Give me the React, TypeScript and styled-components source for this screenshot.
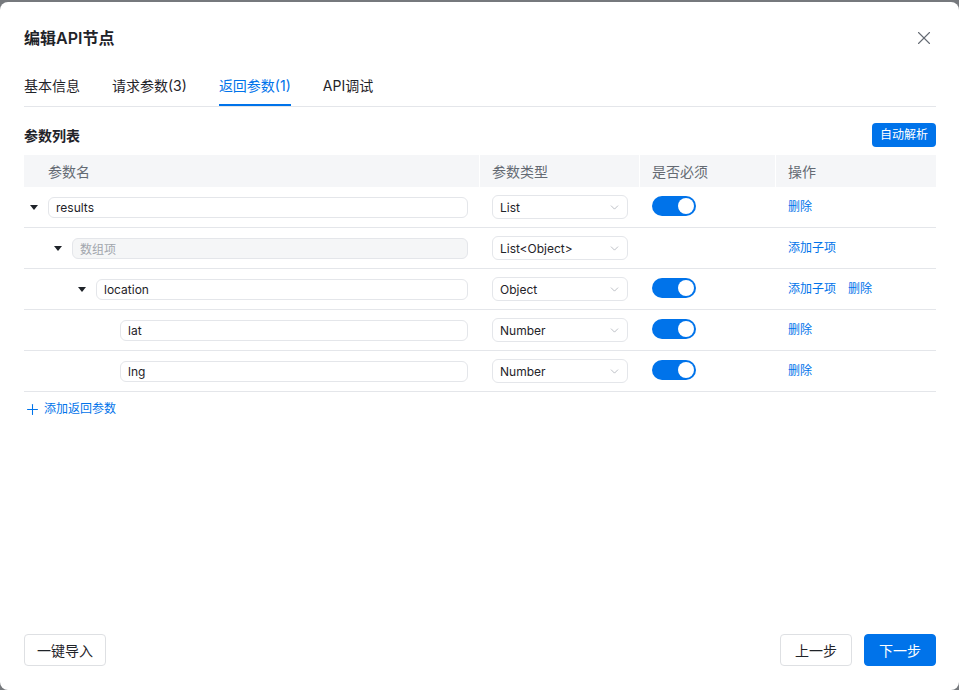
import React from "react";
import styled, { createGlobalStyle } from "styled-components";
import { X, ChevronDown, Plus } from "lucide-react";

const blue = "#0073ea";
const textMain = "#1f2329";
const borderColor = "#e4e6ea";

const GlobalStyle = createGlobalStyle`
  html, body {
    margin: 0;
    padding: 0;
    background: #76797d;
    overflow: hidden;
  }
  body {
    font-family: Inter, "Noto Sans CJK SC", sans-serif;
    color: ${textMain};
  }
`;

interface ParamRow {
  id: string;
  name: string;
  placeholder?: string;
  level: number;
  expandable: boolean;
  type: string;
  required?: boolean;
  actions: string[];
}

const rows: ParamRow[] = [
  { id: "1", name: "results", level: 0, expandable: true, type: "List", required: true, actions: ["删除"] },
  { id: "2", name: "", placeholder: "数组项", level: 1, expandable: true, type: "List<Object>", actions: ["添加子项"] },
  { id: "3", name: "location", level: 2, expandable: true, type: "Object", required: true, actions: ["添加子项", "删除"] },
  { id: "4", name: "lat", level: 3, expandable: false, type: "Number", required: true, actions: ["删除"] },
  { id: "5", name: "lng", level: 3, expandable: false, type: "Number", required: true, actions: ["删除"] },
];

const tabs = ["基本信息", "请求参数(3)", "返回参数(1)", "API调试"];

const App: React.FC = () => {
  return (
    <>
      <GlobalStyle />
      <Modal>
        <Header>
          <Title>编辑API节点</Title>
          <CloseButton>
            <X size={22} strokeWidth={1.2} color="#646a73" />
          </CloseButton>
        </Header>
        <TabBar>
          {tabs.map((t, i) => (
            <Tab key={t} active={i === 2}>
              {t}
            </Tab>
          ))}
        </TabBar>
        <Toolbar>
          <SectionTitle>参数列表</SectionTitle>
          <SmallPrimary>自动解析</SmallPrimary>
        </Toolbar>
        <Table>
          <HeadRow>
            <HeadCell first>参数名</HeadCell>
            <HeadCell>参数类型</HeadCell>
            <HeadCell>是否必须</HeadCell>
            <HeadCell>操作</HeadCell>
          </HeadRow>
          {rows.map((row) => (
            <BodyRow key={row.id}>
              <NameCell>
                <Indent level={row.level} />
                <CaretBox>{row.expandable && <Caret />}</CaretBox>
                <NameInput disabled={!row.name}>
                  {row.name || <Placeholder>{row.placeholder}</Placeholder>}
                </NameInput>
              </NameCell>
              <Cell>
                <Select>
                  <span>{row.type}</span>
                  <ChevronDown size={13} strokeWidth={1.1} color="#8f959e" />
                </Select>
              </Cell>
              <Cell>
                {row.required && (
                  <Switch>
                    <Knob />
                  </Switch>
                )}
              </Cell>
              <ActionCell>
                {row.actions.map((a) => (
                  <LinkText key={a}>{a}</LinkText>
                ))}
              </ActionCell>
            </BodyRow>
          ))}
        </Table>
        <AddRow>
          <Plus size={17} strokeWidth={1.5} color={blue} />
          <span>添加返回参数</span>
        </AddRow>
        <Footer>
          <Button>一键导入</Button>
          <FooterRight>
            <Button>上一步</Button>
            <Button primary>下一步</Button>
          </FooterRight>
        </Footer>
      </Modal>
    </>
  );
};

const Modal = styled.div`
  margin-top: 2px;
  height: 688px;
  width: 959px;
  box-sizing: border-box;
  background: #fff;
  border-radius: 8px;
  padding: 0 23px 24px 24px;
  display: flex;
  flex-direction: column;
`;

const Header = styled.div`
  display: flex;
  align-items: center;
  justify-content: space-between;
  padding-top: 24px;
  height: 24px;
  box-sizing: content-box;
`;

const Title = styled.div`
  font-size: 16px;
  line-height: 24px;
  font-weight: 600;
`;

const CloseButton = styled.div`
  display: flex;
  align-items: center;
  margin-right: 1px;
`;

const TabBar = styled.div`
  display: flex;
  gap: 32px;
  margin-top: 17px;
  border-bottom: 1px solid ${borderColor};
`;

const Tab = styled.div<{ active?: boolean }>`
  font-size: 14px;
  line-height: 22px;
  padding: 8px 0 7px;
  color: ${({ active }) => (active ? blue : textMain)};
  border-bottom: 2px solid ${({ active }) => (active ? blue : "transparent")};
`;

const Toolbar = styled.div`
  display: flex;
  align-items: center;
  justify-content: space-between;
  margin-top: 16px;
  height: 24px;
`;

const SectionTitle = styled.div`
  font-size: 14px;
  font-weight: 600;
`;

const SmallPrimary = styled.div`
  background: ${blue};
  color: #fff;
  font-size: 12px;
  height: 24px;
  line-height: 24px;
  padding: 0 8px;
  border-radius: 4px;
`;

const Table = styled.div`
  margin-top: 8px;
  display: flex;
  flex-direction: column;
`;

const columns = "455px 159px 135px 1fr";

const HeadRow = styled.div`
  display: grid;
  grid-template-columns: ${columns};
  column-gap: 1px;
  height: 32px;
`;

const HeadCell = styled.div<{ first?: boolean }>`
  background: #f5f6f8;
  display: flex;
  align-items: center;
  padding-left: ${({ first }) => (first ? "24px" : "12px")};
  font-size: 14px;
  color: #646a73;
`;

const BodyRow = styled.div`
  display: grid;
  grid-template-columns: ${columns};
  column-gap: 1px;
  height: 40px;
  border-bottom: 1px solid ${borderColor};
`;

const Cell = styled.div`
  display: flex;
  align-items: center;
  padding: 0 11px 0 12px;
`;

const NameCell = styled(Cell)`
  padding: 0 11px 0 0;
`;

const Indent = styled.div<{ level: number }>`
  width: ${({ level }) => level * 24}px;
  flex-shrink: 0;
`;

const CaretBox = styled.div`
  width: 24px;
  flex-shrink: 0;
  display: flex;
  align-items: center;
  padding-left: 6px;
  box-sizing: border-box;
`;

const Caret = styled.div`
  width: 0;
  height: 0;
  border-left: 4px solid transparent;
  border-right: 4px solid transparent;
  border-top: 5px solid #1f2329;
`;

const NameInput = styled.div<{ disabled?: boolean }>`
  flex: 1;
  height: 21px;
  box-sizing: border-box;
  border: 1px solid ${borderColor};
  border-radius: 6px;
  background: ${({ disabled }) => (disabled ? "#f5f6f7" : "#fff")};
  display: flex;
  align-items: center;
  padding: 0 7px;
  font-size: 12px;
`;

const Placeholder = styled.span`
  color: #a2a6ad;
`;

const Select = styled.div`
  width: 136px;
  height: 24px;
  box-sizing: border-box;
  border: 1px solid ${borderColor};
  border-radius: 6px;
  display: flex;
  align-items: center;
  justify-content: space-between;
  padding: 0 6px 0 7px;
  font-size: 12px;
`;

const Switch = styled.div`
  width: 44px;
  height: 20px;
  border-radius: 10px;
  background: ${blue};
  display: flex;
  align-items: center;
  justify-content: flex-end;
  padding: 0 2px;
  box-sizing: border-box;
  margin-top: -3px;
`;

const Knob = styled.div`
  width: 16px;
  height: 16px;
  border-radius: 50%;
  background: #fff;
`;

const ActionCell = styled(Cell)`
  gap: 12px;
  margin-top: -3px;
`;

const LinkText = styled.span`
  color: ${blue};
  font-size: 12px;
`;

const AddRow = styled.div`
  margin-top: 8px;
  display: flex;
  align-items: center;
  gap: 3px;
  font-size: 12px;
  line-height: 18px;
  color: ${blue};
`;

const Footer = styled.div`
  margin-top: auto;
  display: flex;
  align-items: center;
  justify-content: space-between;
`;

const FooterRight = styled.div`
  display: flex;
  gap: 12px;
`;

const Button = styled.div<{ primary?: boolean }>`
  height: 32px;
  min-width: 72px;
  box-sizing: border-box;
  padding: 0 12px;
  border-radius: 4px;
  font-size: 14px;
  display: flex;
  align-items: center;
  justify-content: center;
  border: 1px solid ${({ primary }) => (primary ? blue : "#dee0e3")};
  background: ${({ primary }) => (primary ? blue : "#fff")};
  color: ${({ primary }) => (primary ? "#fff" : textMain)};
`;

export default App;
